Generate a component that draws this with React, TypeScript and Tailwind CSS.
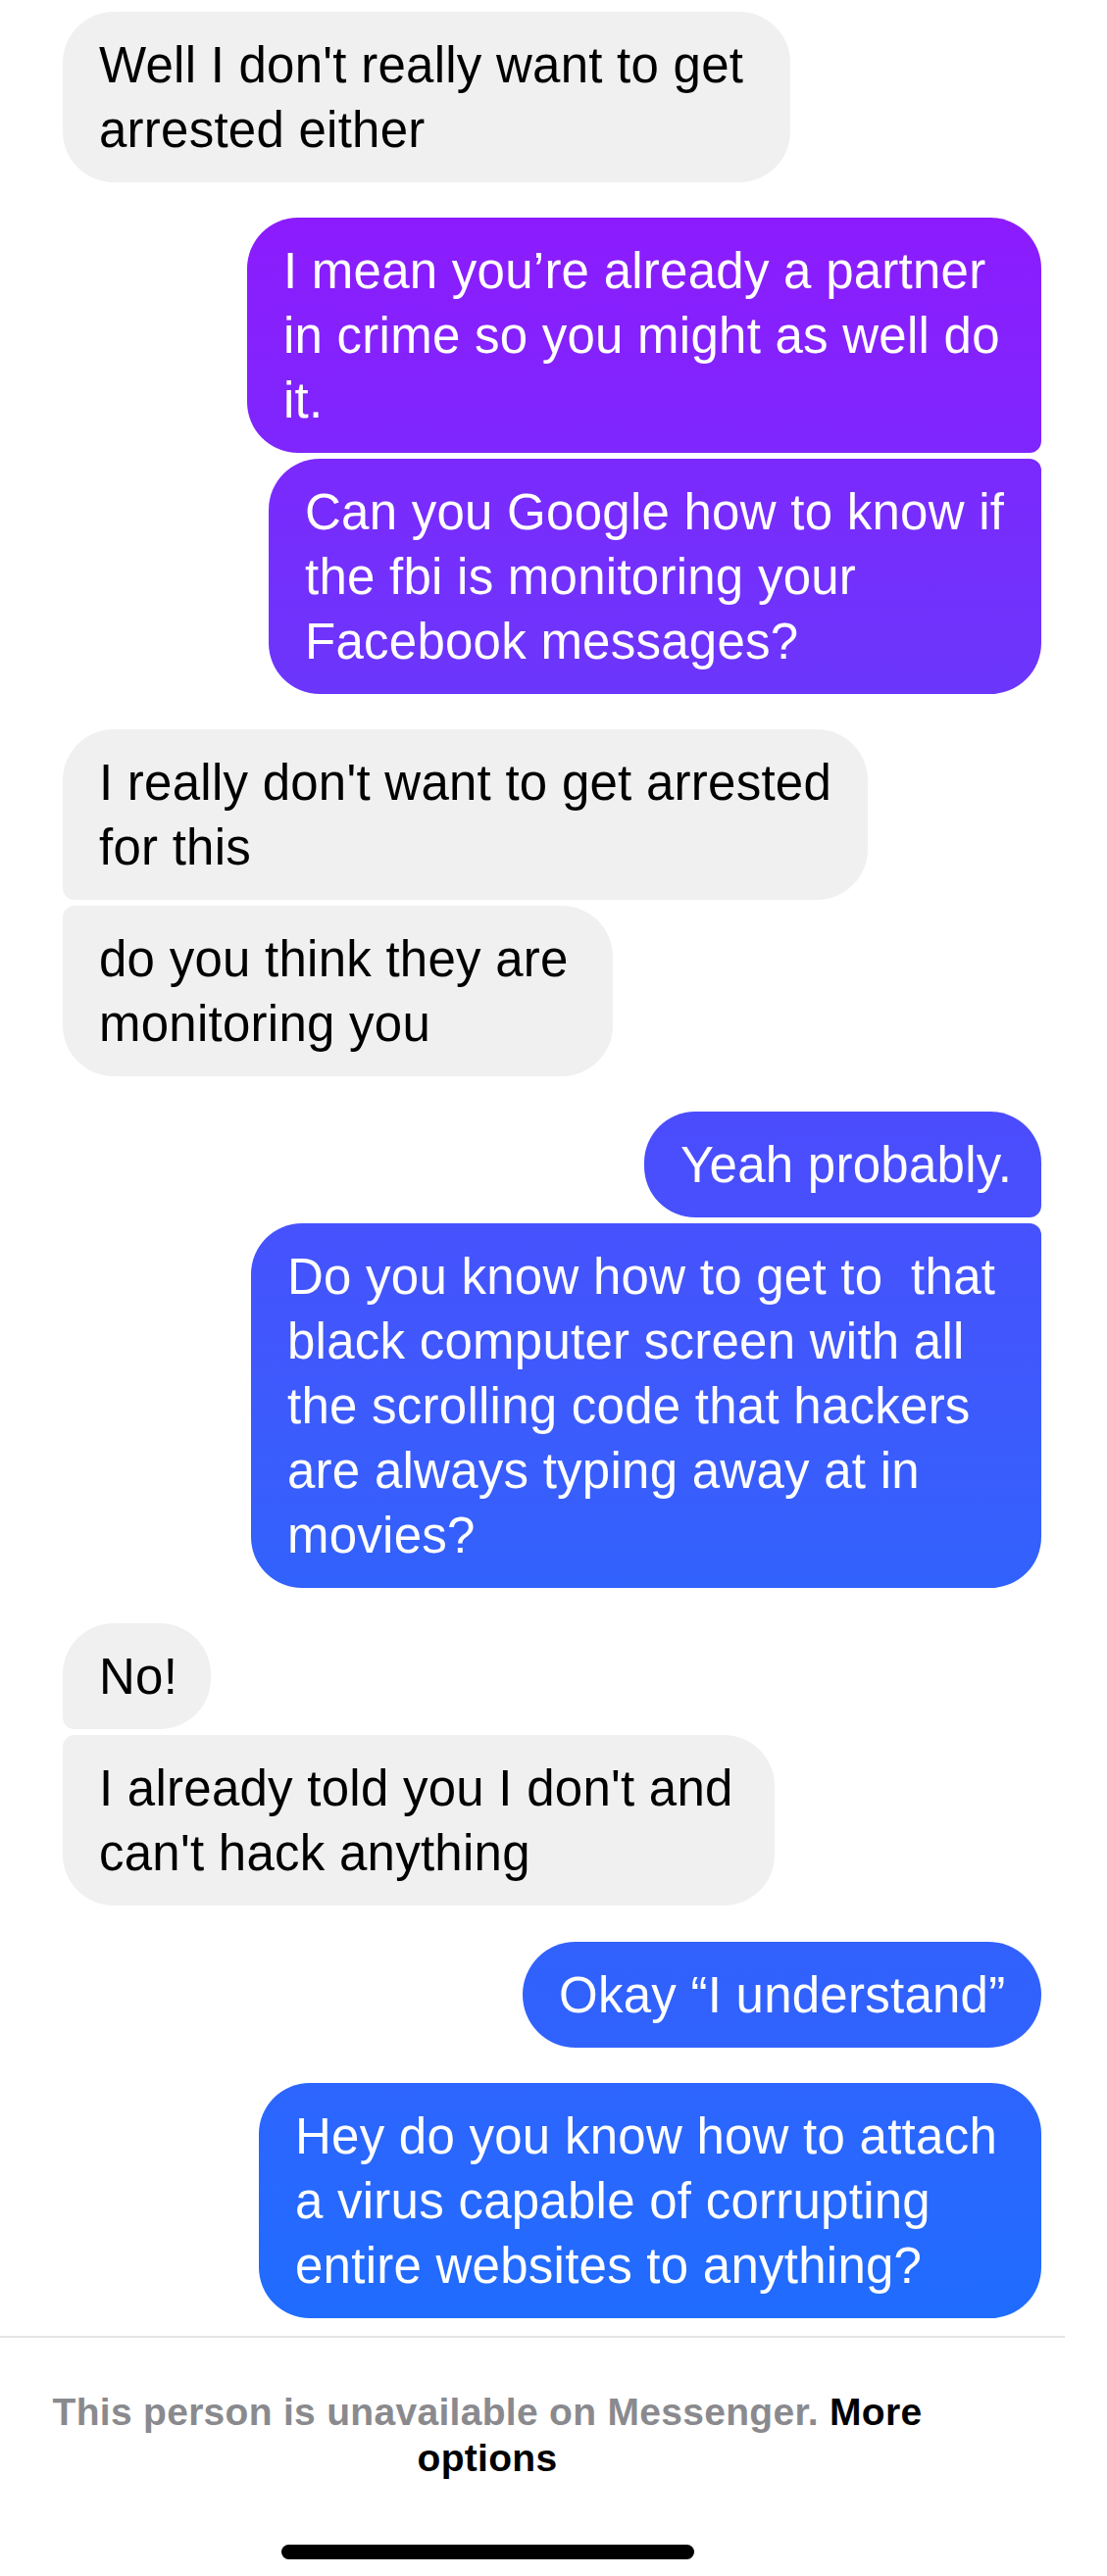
import React from 'react';

type Msg = {
  lines: string[];
  out: boolean;
  width: string;
  corners: string;
  bg: string;
  gap: string;
};

const messages: Msg[] = [
  {
    lines: ["Well I don't really want to get", 'arrested either'],
    out: false,
    width: 'w-[742px]',
    corners: 'rounded-[52px]',
    bg: 'bg-[#f0f0f0] text-black',
    gap: 'mt-0',
  },
  {
    lines: ['I mean you\u2019re already a partner', 'in crime so you might as well do', 'it.'],
    out: true,
    width: 'w-[810px]',
    corners: 'rounded-[52px] rounded-br-[12px]',
    bg: 'bg-gradient-to-b from-[#8c1bfd] to-[#7e26fd] text-white',
    gap: 'mt-[36px]',
  },
  {
    lines: ['Can you Google how to know if', 'the fbi is monitoring your', 'Facebook messages?'],
    out: true,
    width: 'w-[788px]',
    corners: 'rounded-[52px] rounded-tr-[12px]',
    bg: 'bg-gradient-to-b from-[#7b29fd] to-[#6b36fc] text-white',
    gap: 'mt-[6px]',
  },
  {
    lines: ["I really don't want to get arrested", 'for this'],
    out: false,
    width: 'w-[821px]',
    corners: 'rounded-[52px] rounded-bl-[12px]',
    bg: 'bg-[#f0f0f0] text-black',
    gap: 'mt-[36px]',
  },
  {
    lines: ['do you think they are', 'monitoring you'],
    out: false,
    width: 'w-[561px]',
    corners: 'rounded-[52px] rounded-tl-[12px]',
    bg: 'bg-[#f0f0f0] text-black',
    gap: 'mt-[6px]',
  },
  {
    lines: ['Yeah probably.'],
    out: true,
    width: 'w-[405px]',
    corners: 'rounded-[52px] rounded-br-[12px]',
    bg: 'bg-gradient-to-b from-[#4b4cfd] to-[#4850fd] text-white',
    gap: 'mt-[36px]',
  },
  {
    lines: [
      'Do you know how to get to  that',
      'black computer screen with all',
      'the scrolling code that hackers',
      'are always typing away at in',
      'movies?',
    ],
    out: true,
    width: 'w-[806px]',
    corners: 'rounded-[52px] rounded-tr-[12px]',
    bg: 'bg-gradient-to-b from-[#4652fd] to-[#3162fc] text-white',
    gap: 'mt-[6px]',
  },
  {
    lines: ['No!'],
    out: false,
    width: 'w-[151px]',
    corners: 'rounded-[52px] rounded-bl-[12px]',
    bg: 'bg-[#f0f0f0] text-black',
    gap: 'mt-[36px]',
  },
  {
    lines: ["I already told you I don't and", "can't hack anything"],
    out: false,
    width: 'w-[726px]',
    corners: 'rounded-[52px] rounded-tl-[12px]',
    bg: 'bg-[#f0f0f0] text-black',
    gap: 'mt-[6px]',
  },
  {
    lines: ['Okay \u201cI understand\u201d'],
    out: true,
    width: 'w-[529px]',
    corners: 'rounded-[54px]',
    bg: 'bg-gradient-to-b from-[#3261fd] to-[#3062fd] text-white',
    gap: 'mt-[37px]',
  },
  {
    lines: ['Hey do you know how to attach', 'a virus capable of corrupting', 'entire websites to anything?'],
    out: true,
    width: 'w-[798px]',
    corners: 'rounded-[52px]',
    bg: 'bg-gradient-to-b from-[#2d65fe] to-[#1f6cfe] text-white',
    gap: 'mt-[36px]',
  },
];

const Bubble: React.FC<{ msg: Msg }> = ({ msg }) => (
  <div
    className={`${msg.out ? 'self-end' : 'self-start'} ${msg.gap} ${msg.width} ${msg.corners} ${msg.bg} px-[37px] pt-[22px] pb-[20px] text-[51px] leading-[66px] tracking-[0.25px] whitespace-nowrap overflow-hidden`}
  >
    {msg.lines.map((line, i) => (
      <div key={i} className="whitespace-pre">
        {line}
      </div>
    ))}
  </div>
);

export default function App() {
  return (
    <div className="w-[1129px] h-[2628px] bg-white overflow-hidden font-['Liberation_Sans',Arial,sans-serif]">
      <div className="flex flex-col pt-[12px] pl-[64px] pr-[67px]">
        {messages.map((m, i) => (
          <Bubble key={i} msg={m} />
        ))}
      </div>

      <div className="mt-[18px] w-[1086px] h-[2px] bg-[#e4e4e4]" />

      <div className="w-[994px] mt-[52px] text-center text-[39px] leading-[47px] font-bold tracking-[0.3px]">
        <span className="text-[#8a8a8e]">This person is unavailable on Messenger. </span>
        <span className="text-black">
          More
          <br />
          options
        </span>
      </div>

      <div className="w-[994px] flex justify-center mt-[65px]">
        <div className="w-[421px] h-[15px] rounded-full bg-black" />
      </div>
    </div>
  );
}
